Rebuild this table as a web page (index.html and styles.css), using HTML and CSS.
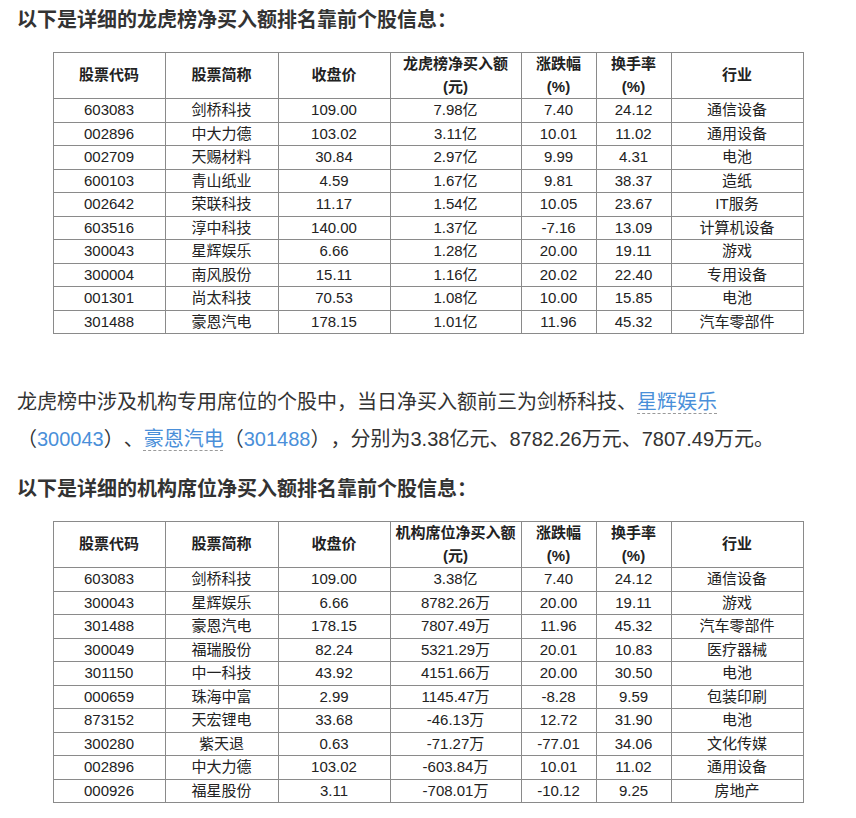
FILE: index.html
```html
<!DOCTYPE html>
<html lang="zh-CN">
<head>
<meta charset="utf-8">
<title>龙虎榜</title>
<link rel="stylesheet" href="styles.css">
</head>
<body>
<div class="article">
  <h2 class="title">以下是详细的龙虎榜净买入额排名靠前个股信息：</h2>
  <table class="stock-table">
    <colgroup>
      <col class="c-code"><col class="c-name"><col class="c-price"><col class="c-amount"><col class="c-pct"><col class="c-pct"><col class="c-ind">
    </colgroup>
    <thead>
      <tr><th>股票代码</th><th>股票简称</th><th>收盘价</th><th>龙虎榜净买入额<br>(元)</th><th>涨跌幅<br>(%)</th><th>换手率<br>(%)</th><th>行业</th></tr>
    </thead>
    <tbody>
      <tr><td>603083</td><td>剑桥科技</td><td>109.00</td><td>7.98亿</td><td>7.40</td><td>24.12</td><td>通信设备</td></tr>
      <tr><td>002896</td><td>中大力德</td><td>103.02</td><td>3.11亿</td><td>10.01</td><td>11.02</td><td>通用设备</td></tr>
      <tr><td>002709</td><td>天赐材料</td><td>30.84</td><td>2.97亿</td><td>9.99</td><td>4.31</td><td>电池</td></tr>
      <tr><td>600103</td><td>青山纸业</td><td>4.59</td><td>1.67亿</td><td>9.81</td><td>38.37</td><td>造纸</td></tr>
      <tr><td>002642</td><td>荣联科技</td><td>11.17</td><td>1.54亿</td><td>10.05</td><td>23.67</td><td>IT服务</td></tr>
      <tr><td>603516</td><td>淳中科技</td><td>140.00</td><td>1.37亿</td><td>-7.16</td><td>13.09</td><td>计算机设备</td></tr>
      <tr><td>300043</td><td>星辉娱乐</td><td>6.66</td><td>1.28亿</td><td>20.00</td><td>19.11</td><td>游戏</td></tr>
      <tr><td>300004</td><td>南风股份</td><td>15.11</td><td>1.16亿</td><td>20.02</td><td>22.40</td><td>专用设备</td></tr>
      <tr><td>001301</td><td>尚太科技</td><td>70.53</td><td>1.08亿</td><td>10.00</td><td>15.85</td><td>电池</td></tr>
      <tr><td>301488</td><td>豪恩汽电</td><td>178.15</td><td>1.01亿</td><td>11.96</td><td>45.32</td><td>汽车零部件</td></tr>
    </tbody>
  </table>
  <p class="text">龙虎榜中涉及机构专用席位的个股中，当日净买入额前三为剑桥科技、<a class="stock-link" href="#">星辉娱乐</a>（<a class="code-link" href="#">300043</a>）、<a class="stock-link" href="#">豪恩汽电</a>（<a class="code-link" href="#">301488</a>），分别为3.38亿元、8782.26万元、7807.49万元。</p>
  <h2 class="title">以下是详细的机构席位净买入额排名靠前个股信息：</h2>
  <table class="stock-table">
    <colgroup>
      <col class="c-code"><col class="c-name"><col class="c-price"><col class="c-amount"><col class="c-pct"><col class="c-pct"><col class="c-ind">
    </colgroup>
    <thead>
      <tr><th>股票代码</th><th>股票简称</th><th>收盘价</th><th>机构席位净买入额<br>(元)</th><th>涨跌幅<br>(%)</th><th>换手率<br>(%)</th><th>行业</th></tr>
    </thead>
    <tbody>
      <tr><td>603083</td><td>剑桥科技</td><td>109.00</td><td>3.38亿</td><td>7.40</td><td>24.12</td><td>通信设备</td></tr>
      <tr><td>300043</td><td>星辉娱乐</td><td>6.66</td><td>8782.26万</td><td>20.00</td><td>19.11</td><td>游戏</td></tr>
      <tr><td>301488</td><td>豪恩汽电</td><td>178.15</td><td>7807.49万</td><td>11.96</td><td>45.32</td><td>汽车零部件</td></tr>
      <tr><td>300049</td><td>福瑞股份</td><td>82.24</td><td>5321.29万</td><td>20.01</td><td>10.83</td><td>医疗器械</td></tr>
      <tr><td>301150</td><td>中一科技</td><td>43.92</td><td>4151.66万</td><td>20.00</td><td>30.50</td><td>电池</td></tr>
      <tr><td>000659</td><td>珠海中富</td><td>2.99</td><td>1145.47万</td><td>-8.28</td><td>9.59</td><td>包装印刷</td></tr>
      <tr><td>873152</td><td>天宏锂电</td><td>33.68</td><td>-46.13万</td><td>12.72</td><td>31.90</td><td>电池</td></tr>
      <tr><td>300280</td><td>紫天退</td><td>0.63</td><td>-71.27万</td><td>-77.01</td><td>34.06</td><td>文化传媒</td></tr>
      <tr><td>002896</td><td>中大力德</td><td>103.02</td><td>-603.84万</td><td>10.01</td><td>11.02</td><td>通用设备</td></tr>
      <tr><td>000926</td><td>福星股份</td><td>3.11</td><td>-708.01万</td><td>-10.12</td><td>9.25</td><td>房地产</td></tr>
    </tbody>
  </table>
</div>
</body>
</html>
```
FILE: styles.css
```css
html, body {
  margin: 0;
  padding: 0;
  background: #fff;
}
body {
  font-family: "Liberation Sans", "Noto Sans CJK SC", sans-serif;
  color: #333;
  text-spacing-trim: space-all;
}
.article {
  padding: 6px 17px 0 17px;
}
.title {
  margin: 0 0 18px 0;
  font-size: 20px;
  line-height: 28px;
  font-weight: bold;
  color: #333;
}
.stock-table {
  border-collapse: collapse;
  table-layout: fixed;
  width: 750px;
  margin: 0 auto;
  font-size: 15px;
  line-height: 22.5px;
  color: #222;
}
.stock-table th,
.stock-table td {
  border: 1px solid #8a8a8a;
  padding: 0;
  text-align: center;
  vertical-align: middle;
  white-space: nowrap;
}
.stock-table th {
  font-weight: bold;
}
.c-code { width: 112px; }
.c-name { width: 113px; }
.c-price { width: 112px; }
.c-amount { width: 131px; }
.c-pct { width: 75px; }
.c-ind { width: 132px; }
.text {
  margin: 50px 0 17px 0;
  font-size: 20px;
  line-height: 37px;
  color: #333;
}
.stock-link,
.code-link {
  color: #4a8fd9;
  text-decoration: none;
}
.stock-link {
  text-decoration: underline dashed #9a9a9a;
  text-decoration-thickness: 1px;
  text-underline-offset: 4px;
}
```
